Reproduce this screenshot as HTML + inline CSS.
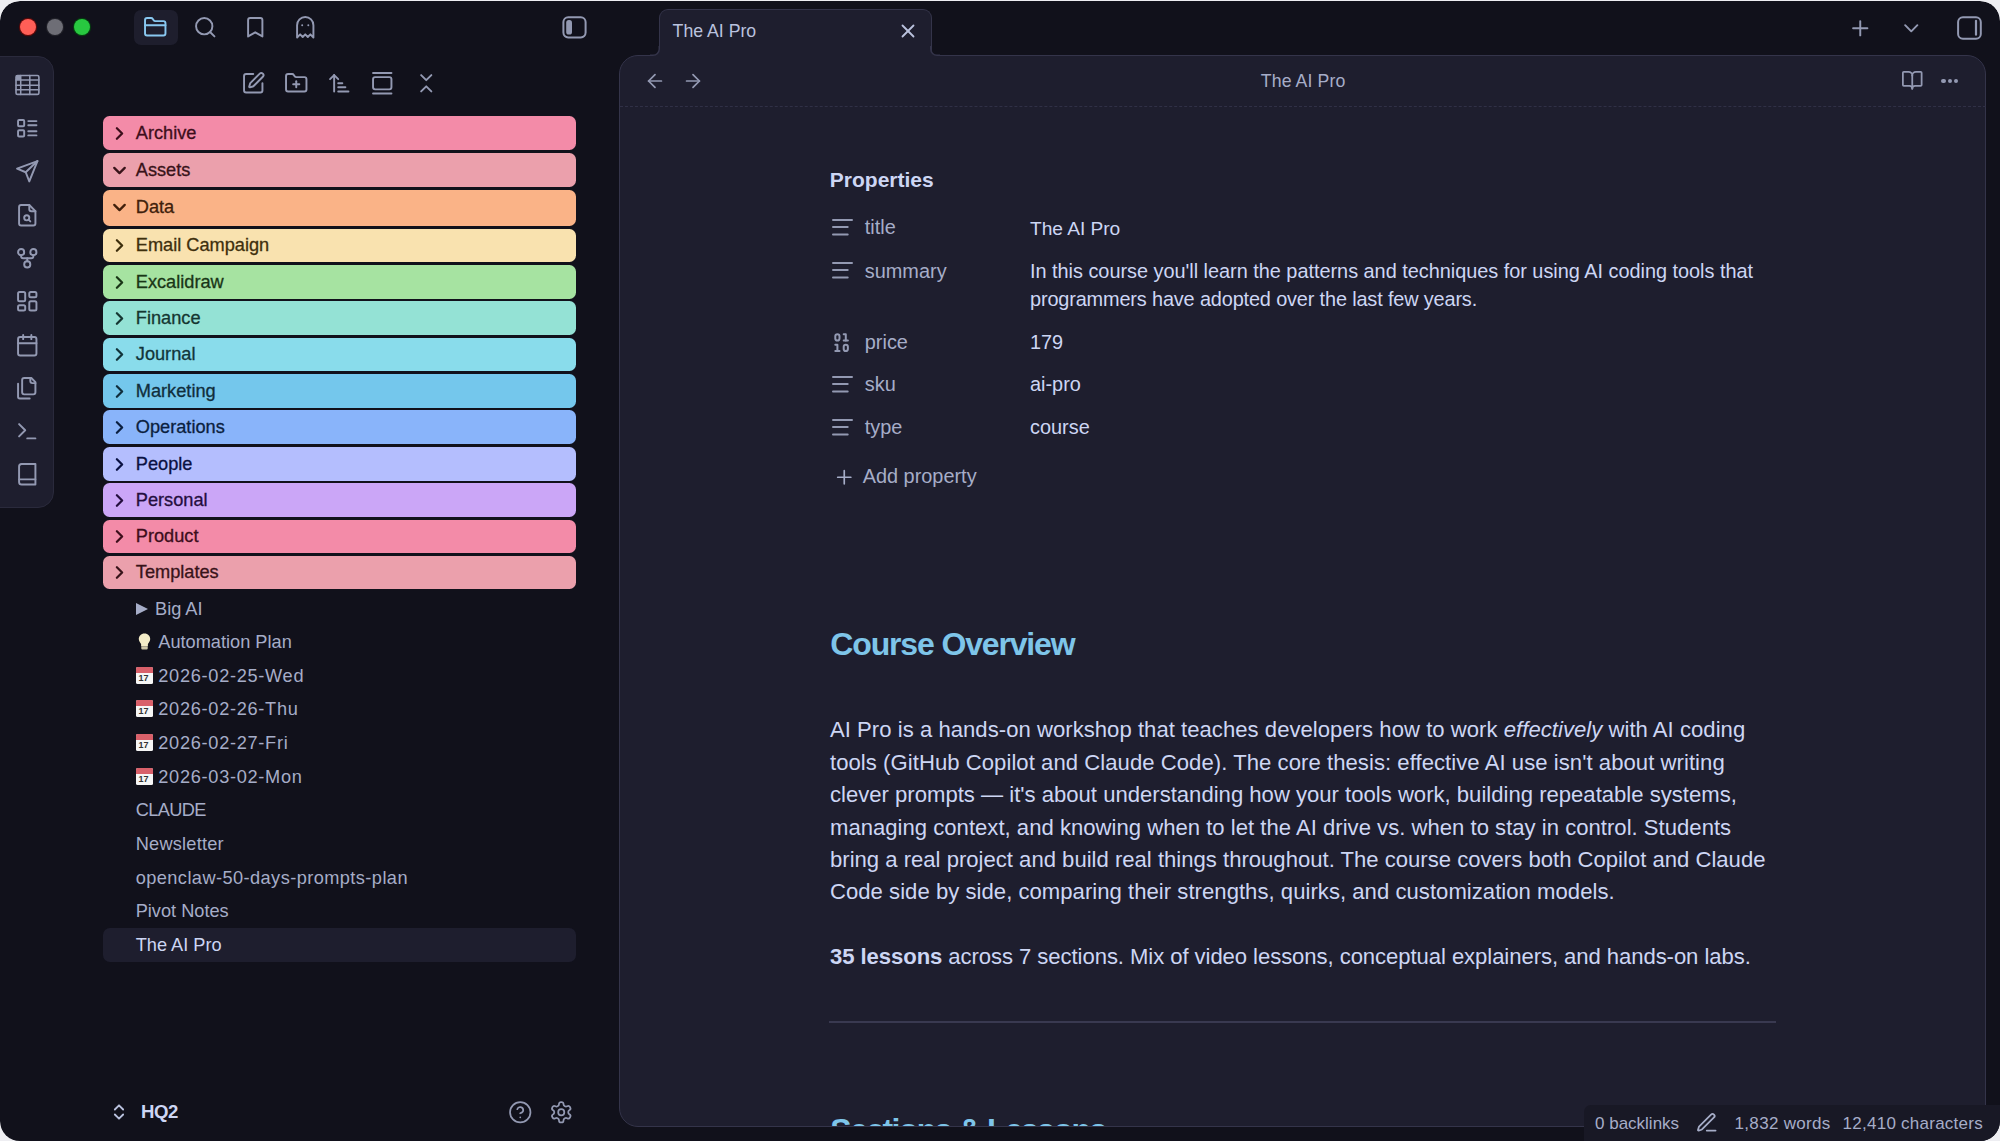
<!DOCTYPE html><html><head><meta charset="utf-8"><style>
html,body{margin:0;padding:0;width:2000px;height:1141px;overflow:hidden;background:#eeeef2;}
*{box-sizing:border-box;}
#win{position:absolute;left:0;top:0;width:2000px;height:1141px;overflow:hidden;clip-path:inset(1px 0 0 0 round 20px);}
#shape{position:absolute;left:0;top:1px;width:2000px;height:1141px;border-radius:20px;background:#11111b;}
.t{position:absolute;white-space:nowrap;line-height:1;font-family:"Liberation Sans",sans-serif;}
.ic{position:absolute;overflow:visible;}
.abs{position:absolute;}
</style></head><body><div id="win"><div id="shape"></div>
<div class="abs" style="left:20.4px;top:19.3px;width:16px;height:16px;border-radius:50%;background:#ff5f57;box-shadow:0 0 0 1.2px #5a0a0a;"></div>
<div class="abs" style="left:47.3px;top:19.3px;width:16px;height:16px;border-radius:50%;background:#6e6e76;box-shadow:0 0 0 1.2px #202028;"></div>
<div class="abs" style="left:74.3px;top:19.3px;width:16px;height:16px;border-radius:50%;background:#28c840;box-shadow:0 0 0 1.2px #063a10;"></div>
<div class="abs" style="left:134px;top:10px;width:44px;height:35px;border-radius:7px;background:#1e1e2d;"></div>
<svg class="ic" style="left:143.25px;top:14.75px;width:24.5px;height:24.5px;" viewBox="0 0 24 24" fill="none" stroke="#89c8f0" stroke-width="1.9" stroke-linecap="round" stroke-linejoin="round"><path d="M20 20a2 2 0 0 0 2-2V8a2 2 0 0 0-2-2h-7.9a2 2 0 0 1-1.69-.9L9.6 3.9A2 2 0 0 0 7.93 3H4a2 2 0 0 0-2 2v13a2 2 0 0 0 2 2Z"/><path d="M2 10h20"/></svg>
<svg class="ic" style="left:193.25px;top:14.75px;width:24.5px;height:24.5px;" viewBox="0 0 24 24" fill="none" stroke="#9399b2" stroke-width="1.9" stroke-linecap="round" stroke-linejoin="round"><circle cx="11" cy="11" r="8"/><path d="m21 21-4.3-4.3"/></svg>
<svg class="ic" style="left:243.25px;top:14.75px;width:24.5px;height:24.5px;" viewBox="0 0 24 24" fill="none" stroke="#9399b2" stroke-width="1.9" stroke-linecap="round" stroke-linejoin="round"><path d="m19 21-7-4-7 4V5a2 2 0 0 1 2-2h10a2 2 0 0 1 2 2v16z"/></svg>
<svg class="ic" style="left:293.25px;top:14.75px;width:24.5px;height:24.5px;" viewBox="0 0 24 24" fill="none" stroke="#9399b2" stroke-width="1.9" stroke-linecap="round" stroke-linejoin="round"><path d="M9 10h.01"/><path d="M15 10h.01"/><path d="M12 2a8 8 0 0 0-8 8v12l3-3 2.5 2.5L12 19l2.5 2.5L17 19l3 3V10a8 8 0 0 0-8-8z"/></svg>
<svg class="ic" style="left:561px;top:15px;width:27px;height:25px" viewBox="0 0 27 25"><rect x="2.4" y="2.3" width="22.2" height="20.1" rx="4.8" fill="none" stroke="#9399b2" stroke-width="2"/><rect x="5.2" y="5.1" width="5.8" height="14.4" rx="2.6" fill="#9399b2"/></svg>
<svg class="ic" style="left:1847.75px;top:15.75px;width:24.5px;height:24.5px;" viewBox="0 0 24 24" fill="none" stroke="#9399b2" stroke-width="1.9" stroke-linecap="round" stroke-linejoin="round"><path d="M5 12h14"/><path d="M12 5v14"/></svg>
<svg class="ic" style="left:1898.75px;top:15.75px;width:24.5px;height:24.5px;" viewBox="0 0 24 24" fill="none" stroke="#9399b2" stroke-width="1.9" stroke-linecap="round" stroke-linejoin="round"><path d="m6 9 6 6 6-6"/></svg>
<svg class="ic" style="left:1956px;top:15px;width:27px;height:25px" viewBox="0 0 27 25"><rect x="2.1" y="2.3" width="22.7" height="21.4" rx="4.8" fill="none" stroke="#9399b2" stroke-width="2"/><path d="M20 5.8v13.9" stroke="#9399b2" stroke-width="2.2" stroke-linecap="round"/></svg>
<div class="abs" style="left:-20px;top:56px;width:74px;height:452px;border-radius:16px;background:#1e1e2e;border:1px solid #2a2a3c;"></div>
<svg class="ic" style="left:14.75px;top:72.75px;width:24.5px;height:24.5px;" viewBox="0 0 24 24" fill="none" stroke="#9399b2" stroke-width="1.9" stroke-linecap="round" stroke-linejoin="round"><rect x="1" y="2.5" width="22.4" height="18.5" rx="1.5" stroke-width="1.6"/><path stroke-width="1.5" d="M5.6 2.5v18.5M14.5 2.5v18.5M1 6.8h22.4M1 11.9h22.4M1 16.5h22.4"/><rect x="1" y="2.5" width="4.6" height="4.3" fill="#9399b2" stroke="none"/></svg>
<svg class="ic" style="left:14.75px;top:116.05px;width:24.5px;height:24.5px;" viewBox="0 0 24 24" fill="none" stroke="#9399b2" stroke-width="1.9" stroke-linecap="round" stroke-linejoin="round"><rect width="6" height="6" x="3" y="4" rx="1"/><rect width="6" height="6" x="3" y="14" rx="1"/><path d="M13 5h8"/><path d="M13 9h8"/><path d="M13 15h8"/><path d="M13 19h8"/></svg>
<svg class="ic" style="left:14.75px;top:159.35px;width:24.5px;height:24.5px;" viewBox="0 0 24 24" fill="none" stroke="#9399b2" stroke-width="1.9" stroke-linecap="round" stroke-linejoin="round"><path d="M22 2 2 9.5l8.5 3.5L14 22z"/><path d="M22 2 10.5 13"/></svg>
<svg class="ic" style="left:14.75px;top:202.65px;width:24.5px;height:24.5px;" viewBox="0 0 24 24" fill="none" stroke="#9399b2" stroke-width="1.9" stroke-linecap="round" stroke-linejoin="round"><path d="M14 2H6a2 2 0 0 0-2 2v16a2 2 0 0 0 2 2h12a2 2 0 0 0 2-2V8z"/><path d="M14 2v4a2 2 0 0 0 2 2h4"/><circle cx="11.5" cy="14.5" r="2.5"/><path d="M13.3 16.3 15 18"/></svg>
<svg class="ic" style="left:14.75px;top:245.95px;width:24.5px;height:24.5px;" viewBox="0 0 24 24" fill="none" stroke="#9399b2" stroke-width="1.9" stroke-linecap="round" stroke-linejoin="round"><circle cx="12" cy="18" r="3"/><circle cx="6" cy="6" r="3"/><circle cx="18" cy="6" r="3"/><path d="M18 9v1a2 2 0 0 1-2 2H8a2 2 0 0 1-2-2V9"/><path d="M12 12v3"/></svg>
<svg class="ic" style="left:14.75px;top:289.25px;width:24.5px;height:24.5px;" viewBox="0 0 24 24" fill="none" stroke="#9399b2" stroke-width="1.9" stroke-linecap="round" stroke-linejoin="round"><rect width="7" height="9" x="3" y="3" rx="1.5"/><rect width="7" height="5" x="14" y="3" rx="1.5"/><rect width="7" height="9" x="14" y="12" rx="1.5"/><rect width="7" height="5" x="3" y="16" rx="1.5"/></svg>
<svg class="ic" style="left:14.75px;top:332.55px;width:24.5px;height:24.5px;" viewBox="0 0 24 24" fill="none" stroke="#9399b2" stroke-width="1.9" stroke-linecap="round" stroke-linejoin="round"><path d="M8 2v4"/><path d="M16 2v4"/><rect width="18" height="18" x="3" y="4" rx="2"/><path d="M3 10h18"/></svg>
<svg class="ic" style="left:14.75px;top:375.85px;width:24.5px;height:24.5px;" viewBox="0 0 24 24" fill="none" stroke="#9399b2" stroke-width="1.9" stroke-linecap="round" stroke-linejoin="round"><path d="M20 7h-3a2 2 0 0 1-2-2V2"/><path d="M9 18a2 2 0 0 1-2-2V4a2 2 0 0 1 2-2h7l4 4v10a2 2 0 0 1-2 2Z"/><path d="M3 7.6v12.8A1.6 1.6 0 0 0 4.6 22h9.8"/></svg>
<svg class="ic" style="left:14.75px;top:419.15px;width:24.5px;height:24.5px;" viewBox="0 0 24 24" fill="none" stroke="#9399b2" stroke-width="1.9" stroke-linecap="round" stroke-linejoin="round"><path d="m4 17 6-6-6-6"/><path d="M12 19h8"/></svg>
<svg class="ic" style="left:14.75px;top:462.45px;width:24.5px;height:24.5px;" viewBox="0 0 24 24" fill="none" stroke="#9399b2" stroke-width="1.9" stroke-linecap="round" stroke-linejoin="round"><path d="M4 19.5v-15A2.5 2.5 0 0 1 6.5 2H20v20H6.5a2.5 2.5 0 0 1-2.5-2.5Z"/><path d="M4 17h16"/></svg>
<svg class="ic" style="left:240.75px;top:70.95px;width:24.5px;height:24.5px;" viewBox="0 0 24 24" fill="none" stroke="#9399b2" stroke-width="1.9" stroke-linecap="round" stroke-linejoin="round"><path d="M12 3H5a2 2 0 0 0-2 2v14a2 2 0 0 0 2 2h14a2 2 0 0 0 2-2v-7"/><path d="M18.375 2.625a1 1 0 0 1 3 3l-9.013 9.014a2 2 0 0 1-.853.505l-2.873.84a.5.5 0 0 1-.62-.62l.84-2.873a2 2 0 0 1 .506-.852z"/></svg>
<svg class="ic" style="left:283.75px;top:70.95px;width:24.5px;height:24.5px;" viewBox="0 0 24 24" fill="none" stroke="#9399b2" stroke-width="1.9" stroke-linecap="round" stroke-linejoin="round"><path d="M12 10v6"/><path d="M9 13h6"/><path d="M20 20a2 2 0 0 0 2-2V8a2 2 0 0 0-2-2h-7.9a2 2 0 0 1-1.69-.9L9.6 3.9A2 2 0 0 0 7.93 3H4a2 2 0 0 0-2 2v13a2 2 0 0 0 2 2Z"/></svg>
<svg class="ic" style="left:326.75px;top:70.95px;width:24.5px;height:24.5px;" viewBox="0 0 24 24" fill="none" stroke="#9399b2" stroke-width="1.9" stroke-linecap="round" stroke-linejoin="round"><path d="m3 8 4-4 4 4"/><path d="M7 4v16"/><path d="M11 12h4"/><path d="M11 16h7"/><path d="M11 20h10"/></svg>
<svg class="ic" style="left:370.25px;top:70.95px;width:24.5px;height:24.5px;" viewBox="0 0 24 24" fill="none" stroke="#9399b2" stroke-width="1.9" stroke-linecap="round" stroke-linejoin="round"><path d="M3 2h18"/><rect width="18" height="12" x="3" y="6" rx="2"/><path d="M3 22h18"/></svg>
<svg class="ic" style="left:413.55px;top:70.95px;width:24.5px;height:24.5px;" viewBox="0 0 24 24" fill="none" stroke="#9399b2" stroke-width="1.9" stroke-linecap="round" stroke-linejoin="round"><path d="m7 20 5-5 5 5"/><path d="m7 4 5 5 5-5"/></svg>
<div class="abs" style="left:103px;top:116px;width:473px;height:33.6px;border-radius:6.5px;background:#f38ba8;"></div>
<svg class="ic" style="left:108.50px;top:122.50px;width:21px;height:21px;" viewBox="0 0 24 24" fill="none" stroke="#3d0e1b" stroke-width="2.6" stroke-linecap="round" stroke-linejoin="round"><path d="m9 18 6-6-6-6"/></svg>
<div class="t " style="left:135.80px;top:123.59px;font-size:18.2px;color:#3d0e1b;font-weight:normal;-webkit-text-stroke:0.3px #3d0e1b">Archive</div>
<div class="abs" style="left:103px;top:153px;width:473px;height:33.6px;border-radius:6.5px;background:#eba0ac;"></div>
<svg class="ic" style="left:108.50px;top:159.50px;width:21px;height:21px;" viewBox="0 0 24 24" fill="none" stroke="#381319" stroke-width="2.6" stroke-linecap="round" stroke-linejoin="round"><path d="m6 9 6 6 6-6"/></svg>
<div class="t " style="left:135.80px;top:160.59px;font-size:18.2px;color:#381319;font-weight:normal;-webkit-text-stroke:0.3px #381319">Assets</div>
<div class="abs" style="left:103px;top:190px;width:473px;height:36.3px;border-radius:6.5px;background:#fab387;"></div>
<svg class="ic" style="left:108.50px;top:196.50px;width:21px;height:21px;" viewBox="0 0 24 24" fill="none" stroke="#40200b" stroke-width="2.6" stroke-linecap="round" stroke-linejoin="round"><path d="m6 9 6 6 6-6"/></svg>
<div class="t " style="left:135.80px;top:197.59px;font-size:18.2px;color:#40200b;font-weight:normal;-webkit-text-stroke:0.3px #40200b">Data</div>
<div class="abs" style="left:103px;top:228.5px;width:473px;height:33.6px;border-radius:6.5px;background:#f9e2af;"></div>
<svg class="ic" style="left:108.50px;top:235.00px;width:21px;height:21px;" viewBox="0 0 24 24" fill="none" stroke="#3e2f0d" stroke-width="2.6" stroke-linecap="round" stroke-linejoin="round"><path d="m9 18 6-6-6-6"/></svg>
<div class="t " style="left:135.80px;top:236.09px;font-size:18.2px;color:#3e2f0d;font-weight:normal;-webkit-text-stroke:0.3px #3e2f0d">Email Campaign</div>
<div class="abs" style="left:103px;top:265px;width:473px;height:33.6px;border-radius:6.5px;background:#a6e3a1;"></div>
<svg class="ic" style="left:108.50px;top:271.50px;width:21px;height:21px;" viewBox="0 0 24 24" fill="none" stroke="#193516" stroke-width="2.6" stroke-linecap="round" stroke-linejoin="round"><path d="m9 18 6-6-6-6"/></svg>
<div class="t " style="left:135.80px;top:272.59px;font-size:18.2px;color:#193516;font-weight:normal;-webkit-text-stroke:0.3px #193516">Excalidraw</div>
<div class="abs" style="left:103px;top:301px;width:473px;height:33.6px;border-radius:6.5px;background:#94e2d5;"></div>
<svg class="ic" style="left:108.50px;top:307.50px;width:21px;height:21px;" viewBox="0 0 24 24" fill="none" stroke="#153631" stroke-width="2.6" stroke-linecap="round" stroke-linejoin="round"><path d="m9 18 6-6-6-6"/></svg>
<div class="t " style="left:135.80px;top:308.59px;font-size:18.2px;color:#153631;font-weight:normal;-webkit-text-stroke:0.3px #153631">Finance</div>
<div class="abs" style="left:103px;top:337.5px;width:473px;height:33.6px;border-radius:6.5px;background:#89dceb;"></div>
<svg class="ic" style="left:108.50px;top:344.00px;width:21px;height:21px;" viewBox="0 0 24 24" fill="none" stroke="#11343a" stroke-width="2.6" stroke-linecap="round" stroke-linejoin="round"><path d="m9 18 6-6-6-6"/></svg>
<div class="t " style="left:135.80px;top:345.09px;font-size:18.2px;color:#11343a;font-weight:normal;-webkit-text-stroke:0.3px #11343a">Journal</div>
<div class="abs" style="left:103px;top:374px;width:473px;height:33.6px;border-radius:6.5px;background:#74c7ec;"></div>
<svg class="ic" style="left:108.50px;top:380.50px;width:21px;height:21px;" viewBox="0 0 24 24" fill="none" stroke="#102e3c" stroke-width="2.6" stroke-linecap="round" stroke-linejoin="round"><path d="m9 18 6-6-6-6"/></svg>
<div class="t " style="left:135.80px;top:381.59px;font-size:18.2px;color:#102e3c;font-weight:normal;-webkit-text-stroke:0.3px #102e3c">Marketing</div>
<div class="abs" style="left:103px;top:410.3px;width:473px;height:33.6px;border-radius:6.5px;background:#89b4fa;"></div>
<svg class="ic" style="left:108.50px;top:416.80px;width:21px;height:21px;" viewBox="0 0 24 24" fill="none" stroke="#0b1f40" stroke-width="2.6" stroke-linecap="round" stroke-linejoin="round"><path d="m9 18 6-6-6-6"/></svg>
<div class="t " style="left:135.80px;top:417.89px;font-size:18.2px;color:#0b1f40;font-weight:normal;-webkit-text-stroke:0.3px #0b1f40">Operations</div>
<div class="abs" style="left:103px;top:447.2px;width:473px;height:33.6px;border-radius:6.5px;background:#b4befe;"></div>
<svg class="ic" style="left:108.50px;top:453.70px;width:21px;height:21px;" viewBox="0 0 24 24" fill="none" stroke="#0a1142" stroke-width="2.6" stroke-linecap="round" stroke-linejoin="round"><path d="m9 18 6-6-6-6"/></svg>
<div class="t " style="left:135.80px;top:454.79px;font-size:18.2px;color:#0a1142;font-weight:normal;-webkit-text-stroke:0.3px #0a1142">People</div>
<div class="abs" style="left:103px;top:483.3px;width:473px;height:33.6px;border-radius:6.5px;background:#cba6f7;"></div>
<svg class="ic" style="left:108.50px;top:489.80px;width:21px;height:21px;" viewBox="0 0 24 24" fill="none" stroke="#240e3e" stroke-width="2.6" stroke-linecap="round" stroke-linejoin="round"><path d="m9 18 6-6-6-6"/></svg>
<div class="t " style="left:135.80px;top:490.89px;font-size:18.2px;color:#240e3e;font-weight:normal;-webkit-text-stroke:0.3px #240e3e">Personal</div>
<div class="abs" style="left:103px;top:519.7px;width:473px;height:33.6px;border-radius:6.5px;background:#f38ba8;"></div>
<svg class="ic" style="left:108.50px;top:526.20px;width:21px;height:21px;" viewBox="0 0 24 24" fill="none" stroke="#3d0e1b" stroke-width="2.6" stroke-linecap="round" stroke-linejoin="round"><path d="m9 18 6-6-6-6"/></svg>
<div class="t " style="left:135.80px;top:527.29px;font-size:18.2px;color:#3d0e1b;font-weight:normal;-webkit-text-stroke:0.3px #3d0e1b">Product</div>
<div class="abs" style="left:103px;top:555.8px;width:473px;height:33.6px;border-radius:6.5px;background:#eba0ac;"></div>
<svg class="ic" style="left:108.50px;top:562.30px;width:21px;height:21px;" viewBox="0 0 24 24" fill="none" stroke="#381319" stroke-width="2.6" stroke-linecap="round" stroke-linejoin="round"><path d="m9 18 6-6-6-6"/></svg>
<div class="t " style="left:135.80px;top:563.39px;font-size:18.2px;color:#381319;font-weight:normal;-webkit-text-stroke:0.3px #381319">Templates</div>
<div class="abs" style="left:103px;top:928.3px;width:473px;height:34px;border-radius:7px;background:#1e1e2e;"></div>
<svg class="ic" style="left:136.4px;top:602.5px;width:12px;height:12px" viewBox="0 0 12 12"><path d="M0 0L12 6L0 12Z" fill="#a6adc8"/></svg>
<div class="t " style="left:155.00px;top:599.59px;font-size:18.2px;color:#a6adc8;font-weight:normal;letter-spacing:0px">Big AI</div>
<svg class="ic" style="left:138px;top:633.2px;width:13px;height:18px" viewBox="0 0 13 18"><path d="M6.5 0.5C3 0.5 0.8 3 0.8 6c0 2.3 1.5 3.6 2.3 5v2.5h6.8V11c.8-1.4 2.3-2.7 2.3-5 0-3-2.2-5.5-5.7-5.5z" fill="#f4ecc8"/><rect x="3.3" y="13.6" width="6.4" height="3" rx="1" fill="#cfc7a8"/></svg>
<div class="t " style="left:158.30px;top:633.29px;font-size:18.2px;color:#a6adc8;font-weight:normal;letter-spacing:0px">Automation Plan</div>
<div class="abs" style="left:136px;top:666.6px;width:16.5px;height:17px;background:#f6f6f6;border-radius:1.5px;overflow:hidden;"><div class="abs" style="left:0;top:0;width:16.5px;height:6px;background:#d9606a;"></div><div class="t" style="left:2.5px;top:7px;font-size:9px;color:#333;font-weight:bold;">17</div></div>
<div class="t " style="left:158.30px;top:666.59px;font-size:18.2px;color:#a6adc8;font-weight:normal;letter-spacing:0.7px">2026-02-25-Wed</div>
<div class="abs" style="left:136px;top:700.4px;width:16.5px;height:17px;background:#f6f6f6;border-radius:1.5px;overflow:hidden;"><div class="abs" style="left:0;top:0;width:16.5px;height:6px;background:#d9606a;"></div><div class="t" style="left:2.5px;top:7px;font-size:9px;color:#333;font-weight:bold;">17</div></div>
<div class="t " style="left:158.30px;top:700.39px;font-size:18.2px;color:#a6adc8;font-weight:normal;letter-spacing:0.7px">2026-02-26-Thu</div>
<div class="abs" style="left:136px;top:734.2px;width:16.5px;height:17px;background:#f6f6f6;border-radius:1.5px;overflow:hidden;"><div class="abs" style="left:0;top:0;width:16.5px;height:6px;background:#d9606a;"></div><div class="t" style="left:2.5px;top:7px;font-size:9px;color:#333;font-weight:bold;">17</div></div>
<div class="t " style="left:158.30px;top:734.19px;font-size:18.2px;color:#a6adc8;font-weight:normal;letter-spacing:0.7px">2026-02-27-Fri</div>
<div class="abs" style="left:136px;top:768.0px;width:16.5px;height:17px;background:#f6f6f6;border-radius:1.5px;overflow:hidden;"><div class="abs" style="left:0;top:0;width:16.5px;height:6px;background:#d9606a;"></div><div class="t" style="left:2.5px;top:7px;font-size:9px;color:#333;font-weight:bold;">17</div></div>
<div class="t " style="left:158.30px;top:767.99px;font-size:18.2px;color:#a6adc8;font-weight:normal;letter-spacing:0.7px">2026-03-02-Mon</div>
<div class="t " style="left:135.70px;top:801.39px;font-size:18.2px;color:#a6adc8;font-weight:normal;letter-spacing:-0.6px">CLAUDE</div>
<div class="t " style="left:135.70px;top:834.79px;font-size:18.2px;color:#a6adc8;font-weight:normal;letter-spacing:0.22px">Newsletter</div>
<div class="t " style="left:135.70px;top:868.69px;font-size:18.2px;color:#a6adc8;font-weight:normal;letter-spacing:0.43px">openclaw-50-days-prompts-plan</div>
<div class="t " style="left:135.70px;top:901.79px;font-size:18.2px;color:#a6adc8;font-weight:normal;letter-spacing:0px">Pivot Notes</div>
<div class="t " style="left:135.70px;top:935.79px;font-size:18.2px;color:#cdd6f4;font-weight:normal;letter-spacing:0px">The AI Pro</div>
<svg class="ic" style="left:109.00px;top:1102.00px;width:20px;height:20px;" viewBox="0 0 24 24" fill="none" stroke="#bac2de" stroke-width="2.2" stroke-linecap="round" stroke-linejoin="round"><path d="m7 15 5 5 5-5"/><path d="m7 9 5-5 5 5"/></svg>
<div class="t " style="left:141.00px;top:1103.26px;font-size:18.6px;color:#cdd6f4;font-weight:bold;letter-spacing:-0.4px">HQ2</div>
<svg class="ic" style="left:507.75px;top:1099.75px;width:24.5px;height:24.5px;" viewBox="0 0 24 24" fill="none" stroke="#9399b2" stroke-width="1.7" stroke-linecap="round" stroke-linejoin="round"><circle cx="12" cy="12" r="10"/><path d="M9.09 9a3 3 0 0 1 5.83 1c0 2-3 3-3 3"/><path d="M12 17h.01"/></svg>
<svg class="ic" style="left:548.75px;top:1099.75px;width:24.5px;height:24.5px;" viewBox="0 0 24 24" fill="none" stroke="#9399b2" stroke-width="1.7" stroke-linecap="round" stroke-linejoin="round"><path d="M12.22 2h-.44a2 2 0 0 0-2 2v.18a2 2 0 0 1-1 1.73l-.43.25a2 2 0 0 1-2 0l-.15-.08a2 2 0 0 0-2.73.73l-.22.38a2 2 0 0 0 .73 2.73l.15.1a2 2 0 0 1 1 1.72v.51a2 2 0 0 1-1 1.74l-.15.09a2 2 0 0 0-.73 2.73l.22.38a2 2 0 0 0 2.73.73l.15-.08a2 2 0 0 1 2 0l.43.25a2 2 0 0 1 1 1.73V20a2 2 0 0 0 2 2h.44a2 2 0 0 0 2-2v-.18a2 2 0 0 1 1-1.73l.43-.25a2 2 0 0 1 2 0l.15.08a2 2 0 0 0 2.73-.73l.22-.39a2 2 0 0 0-.73-2.73l-.15-.08a2 2 0 0 1-1-1.74v-.5a2 2 0 0 1 1-1.74l.15-.09a2 2 0 0 0 .73-2.73l-.22-.38a2 2 0 0 0-2.73-.73l-.15.08a2 2 0 0 1-2 0l-.43-.25a2 2 0 0 1-1-1.73V4a2 2 0 0 0-2-2z"/><circle cx="12" cy="12" r="3"/></svg>
<div class="abs" style="left:619px;top:55px;width:1367px;height:1072px;border-radius:19px;background:#1e1e2e;border:1.5px solid #34344a;overflow:hidden;" id="ed"></div>
<div class="abs" style="left:658.5px;top:9px;width:273px;height:49px;border-radius:9px 9px 0 0;background:#1e1e2e;border:1.5px solid #34344a;border-bottom:none;"></div>
<div class="abs" style="left:660px;top:53px;width:270px;height:6px;background:#1e1e2e;"></div>
<svg class="ic" style="left:650px;top:46px;width:12px;height:12px" viewBox="0 0 12 12"><path d="M9.25 3 A6.25 6.25 0 0 1 3 9.25 L 3 12 L 10 12 L 10 3 Z" fill="#1e1e2e"/><path d="M9.25 0 L9.25 3 A6.25 6.25 0 0 1 3 9.25 L0 9.25" fill="none" stroke="#34344a" stroke-width="1.5"/></svg>
<svg class="ic" style="left:928px;top:46px;width:12px;height:12px" viewBox="0 0 12 12"><path d="M2.75 3 A6.25 6.25 0 0 0 9 9.25 L 9 12 L 2 12 L 2 3 Z" fill="#1e1e2e"/><path d="M2.75 0 L2.75 3 A6.25 6.25 0 0 0 9 9.25 L12 9.25" fill="none" stroke="#34344a" stroke-width="1.5"/></svg>
<div class="t " style="left:672.60px;top:23.02px;font-size:17.7px;color:#bac2de;font-weight:normal;">The AI Pro</div>
<svg class="ic" style="left:897.00px;top:20.00px;width:22px;height:22px;" viewBox="0 0 24 24" fill="none" stroke="#bac2de" stroke-width="2" stroke-linecap="round" stroke-linejoin="round"><path d="M18 6 6 18"/><path d="m6 6 12 12"/></svg>
<svg class="ic" style="left:644.30px;top:69.70px;width:22px;height:22px;" viewBox="0 0 24 24" fill="none" stroke="#9399b2" stroke-width="1.9" stroke-linecap="round" stroke-linejoin="round"><path d="m12 19-7-7 7-7"/><path d="M19 12H5"/></svg>
<svg class="ic" style="left:682.00px;top:69.70px;width:22px;height:22px;" viewBox="0 0 24 24" fill="none" stroke="#9399b2" stroke-width="1.9" stroke-linecap="round" stroke-linejoin="round"><path d="M5 12h14"/><path d="m12 5 7 7-7 7"/></svg>
<div class="t " style="left:1260.80px;top:72.72px;font-size:17.7px;color:#a6adc8;font-weight:normal;letter-spacing:0.1px">The AI Pro</div>
<svg class="ic" style="left:1900.75px;top:69.35px;width:22.5px;height:22.5px;" viewBox="0 0 24 24" fill="none" stroke="#9399b2" stroke-width="1.9" stroke-linecap="round" stroke-linejoin="round"><path d="M12 7v14"/><path d="M3 18a1 1 0 0 1-1-1V4a1 1 0 0 1 1-1h5a4 4 0 0 1 4 4 4 4 0 0 1 4-4h5a1 1 0 0 1 1 1v13a1 1 0 0 1-1 1h-6a3 3 0 0 0-3 3 3 3 0 0 0-3-3z"/></svg>
<div class="abs" style="left:1941.4px;top:78.60000000000001px;width:4.2px;height:4.2px;border-radius:50%;background:#9399b2;"></div>
<div class="abs" style="left:1947.8000000000002px;top:78.60000000000001px;width:4.2px;height:4.2px;border-radius:50%;background:#9399b2;"></div>
<div class="abs" style="left:1954.2px;top:78.60000000000001px;width:4.2px;height:4.2px;border-radius:50%;background:#9399b2;"></div>
<div class="abs" style="left:620px;top:105.5px;width:1366px;height:0;border-top:1.5px dashed #303046;"></div>
<div class="t " style="left:829.80px;top:169.32px;font-size:21px;color:#cdd6f4;font-weight:bold;">Properties</div>
<svg class="ic" style="left:831px;top:218px;width:24px;height:20px" viewBox="0 0 24 20" stroke="#9399b2" stroke-width="2" stroke-linecap="round"><path d="M2 2h19M2 9h14.7M2 16.4h14.7"/></svg>
<svg class="ic" style="left:831px;top:261.3px;width:24px;height:20px" viewBox="0 0 24 20" stroke="#9399b2" stroke-width="2" stroke-linecap="round"><path d="M2 2h19M2 9h14.7M2 16.4h14.7"/></svg>
<svg class="ic" style="left:831px;top:374.75px;width:24px;height:20px" viewBox="0 0 24 20" stroke="#9399b2" stroke-width="2" stroke-linecap="round"><path d="M2 2h19M2 9h14.7M2 16.4h14.7"/></svg>
<svg class="ic" style="left:831px;top:417.5px;width:24px;height:20px" viewBox="0 0 24 20" stroke="#9399b2" stroke-width="2" stroke-linecap="round"><path d="M2 2h19M2 9h14.7M2 16.4h14.7"/></svg>
<svg class="ic" style="left:829.40px;top:329.60px;width:25.2px;height:25.2px;" viewBox="0 0 24 24" fill="none" stroke="#9399b2" stroke-width="1.9" stroke-linecap="round" stroke-linejoin="round"><rect x="14" y="14" width="4" height="6" rx="2"/><rect x="6" y="4" width="4" height="6" rx="2"/><path d="M6 20h4"/><path d="M14 10h4"/><path d="M6 14h2v6"/><path d="M14 4h2v6"/></svg>
<div class="t " style="left:864.80px;top:218.15px;font-size:19.9px;color:#a6adc8;font-weight:normal;">title</div>
<div class="t " style="left:864.80px;top:261.55px;font-size:19.9px;color:#a6adc8;font-weight:normal;">summary</div>
<div class="t " style="left:864.80px;top:332.85px;font-size:19.9px;color:#a6adc8;font-weight:normal;">price</div>
<div class="t " style="left:864.80px;top:375.15px;font-size:19.9px;color:#a6adc8;font-weight:normal;">sku</div>
<div class="t " style="left:864.80px;top:417.85px;font-size:19.9px;color:#a6adc8;font-weight:normal;">type</div>
<div class="t " style="left:1030.00px;top:219.35px;font-size:19.2px;color:#cdd6f4;font-weight:normal;letter-spacing:-0.05px">The AI Pro</div>
<div class="t " style="left:1030.00px;top:261.55px;font-size:19.9px;color:#cdd6f4;font-weight:normal;letter-spacing:-0.02px">In this course you&#x27;ll learn the patterns and techniques for using AI coding tools that</div>
<div class="t " style="left:1030.00px;top:290.05px;font-size:19.9px;color:#cdd6f4;font-weight:normal;letter-spacing:-0.15px">programmers have adopted over the last few years.</div>
<div class="t " style="left:1030.00px;top:332.85px;font-size:19.9px;color:#cdd6f4;font-weight:normal;">179</div>
<div class="t " style="left:1030.00px;top:375.15px;font-size:19.9px;color:#cdd6f4;font-weight:normal;">ai-pro</div>
<div class="t " style="left:1030.00px;top:417.85px;font-size:19.9px;color:#cdd6f4;font-weight:normal;">course</div>
<svg class="ic" style="left:833.05px;top:465.75px;width:22.5px;height:22.5px;" viewBox="0 0 24 24" fill="none" stroke="#a6adc8" stroke-width="1.8" stroke-linecap="round" stroke-linejoin="round"><path d="M5 12h14"/><path d="M12 5v14"/></svg>
<div class="t " style="left:862.70px;top:467.05px;font-size:19.9px;color:#a6adc8;font-weight:normal;">Add property</div>
<div class="t " style="left:830.30px;top:628.21px;font-size:32px;color:#7ec5e9;font-weight:bold;letter-spacing:-1.15px">Course Overview</div>
<div class="t " style="left:830.00px;top:719.39px;font-size:22.1px;color:#cdd6f4;font-weight:normal;letter-spacing:0.03px">AI Pro is a hands-on workshop that teaches developers how to work <i>effectively</i> with AI coding</div>
<div class="t " style="left:830.00px;top:751.81px;font-size:22.1px;color:#cdd6f4;font-weight:normal;letter-spacing:0.05px">tools (GitHub Copilot and Claude Code). The core thesis: effective AI use isn't about writing</div>
<div class="t " style="left:830.00px;top:784.23px;font-size:22.1px;color:#cdd6f4;font-weight:normal;letter-spacing:0px">clever prompts — it's about understanding how your tools work, building repeatable systems,</div>
<div class="t " style="left:830.00px;top:816.65px;font-size:22.1px;color:#cdd6f4;font-weight:normal;letter-spacing:0.01px">managing context, and knowing when to let the AI drive vs. when to stay in control. Students</div>
<div class="t " style="left:830.00px;top:849.07px;font-size:22.1px;color:#cdd6f4;font-weight:normal;letter-spacing:0px">bring a real project and build real things throughout. The course covers both Copilot and Claude</div>
<div class="t " style="left:830.00px;top:881.49px;font-size:22.1px;color:#cdd6f4;font-weight:normal;letter-spacing:0.03px">Code side by side, comparing their strengths, quirks, and customization models.</div>
<div class="t " style="left:830.00px;top:946.09px;font-size:22.1px;color:#cdd6f4;font-weight:normal;letter-spacing:-0.07px"><b>35 lessons</b> across 7 sections. Mix of video lessons, conceptual explainers, and hands-on labs.</div>
<div class="abs" style="left:829px;top:1020.5px;width:947px;height:2px;background:#393950;"></div>
<div class="abs" style="left:620px;top:1090px;width:1366px;height:35.5px;overflow:hidden;">
<div class="t " style="left:210.30px;top:23.91px;font-size:32px;color:#7ec5e9;font-weight:bold;letter-spacing:-1.6px">Sections &amp; Lessons</div>
</div>
<div class="abs" style="left:1584px;top:1104.5px;width:430px;height:50px;border-radius:7px 0 0 0;background:#181825;"></div>
<div class="t " style="left:1595.00px;top:1114.61px;font-size:17px;color:#a6adc8;font-weight:normal;">0 backlinks</div>
<svg class="ic" style="left:1695.25px;top:1111.25px;width:23.5px;height:23.5px;" viewBox="0 0 24 24" fill="none" stroke="#a6adc8" stroke-width="1.8" stroke-linecap="round" stroke-linejoin="round"><path d="M12 20h9"/><path d="M16.376 3.622a1 1 0 0 1 3.002 3.002L7.368 18.635a2 2 0 0 1-.855.506l-2.872.838a.5.5 0 0 1-.62-.62l.838-2.872a2 2 0 0 1 .506-.854z"/></svg>
<div class="t " style="left:1734.60px;top:1114.61px;font-size:17px;color:#a6adc8;font-weight:normal;letter-spacing:0.3px">1,832 words</div>
<div class="t " style="left:1842.60px;top:1114.61px;font-size:17px;color:#a6adc8;font-weight:normal;letter-spacing:0.25px">12,410 characters</div>
</div></body></html>
